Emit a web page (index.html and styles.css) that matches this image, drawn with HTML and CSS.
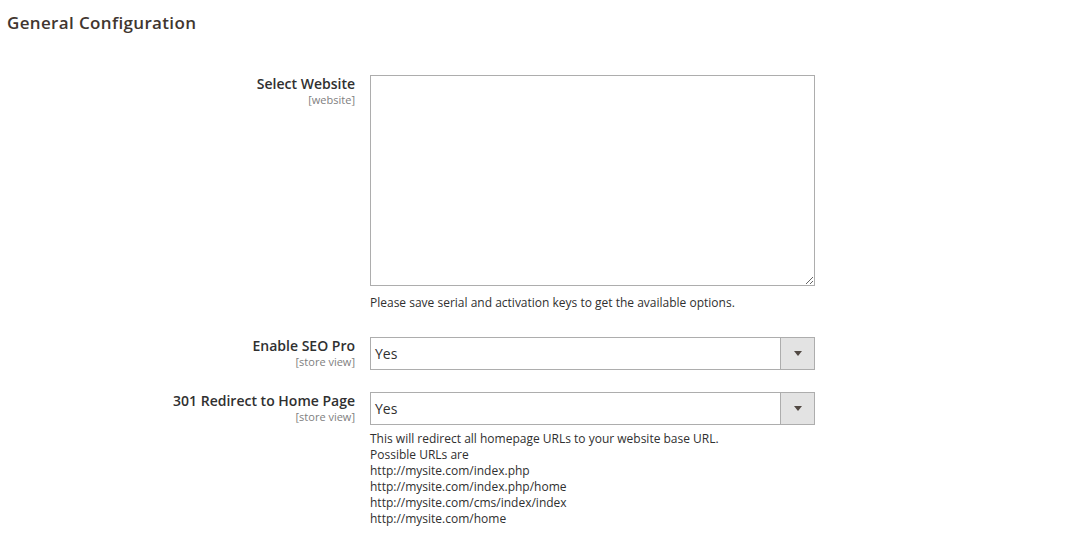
FILE: index.html
```html
<!DOCTYPE html>
<html>
<head>
<meta charset="utf-8">
<link rel="stylesheet" href="styles.css">
</head>
<body>
<div class="page">
  <h2 class="section-title">General Configuration</h2>
  <div class="form">
    <div class="row row-website">
      <div class="label">
        <span class="label-text">Select Website</span>
        <span class="scope">[website]</span>
      </div>
      <div class="control">
        <textarea class="multiselect"></textarea>
        <p class="note">Please save serial and activation keys to get the available options.</p>
      </div>
    </div>
    <div class="row row-seo">
      <div class="label">
        <span class="label-text">Enable SEO Pro</span>
        <span class="scope">[store view]</span>
      </div>
      <div class="control">
        <div class="select">
          <span class="select-value">Yes</span>
          <span class="select-btn"><svg width="8" height="5" viewBox="0 0 8 5"><path d="M0 0h8L4 5z" fill="#514943"/></svg></span>
        </div>
      </div>
    </div>
    <div class="row row-redirect">
      <div class="label">
        <span class="label-text">301 Redirect to Home Page</span>
        <span class="scope">[store view]</span>
      </div>
      <div class="control">
        <div class="select">
          <span class="select-value">Yes</span>
          <span class="select-btn"><svg width="8" height="5" viewBox="0 0 8 5"><path d="M0 0h8L4 5z" fill="#514943"/></svg></span>
        </div>
        <p class="comment">This will redirect all homepage URLs to your website base URL.<br>Possible URLs are<br>http://mysite.com/index.php<br>http://mysite.com/index.php/home<br>http://mysite.com/cms/index/index<br>http://mysite.com/home</p>
      </div>
    </div>
  </div>
</div>
</body>
</html>
```

FILE: styles.css
```css
html, body {
  margin: 0;
  padding: 0;
  background: #ffffff;
}
body {
  font-family: "Open Sans", "Liberation Sans", sans-serif;
  color: #303030;
}
.page {
  padding: 11px 0 0 7px;
}
.section-title {
  margin: 0;
  font-size: 17px;
  font-weight: 600;
  line-height: 24px;
  color: #41362f;
  letter-spacing: 0.35px;
}
.form {
  margin-top: 40px;
  display: flex;
  flex-direction: column;
}
.row {
  display: grid;
  grid-template-columns: 348px 445px;
  column-gap: 15px;
}
.row-seo {
  margin-top: 26px;
}
.row-redirect {
  margin-top: 22px;
}
.label {
  display: flex;
  flex-direction: column;
  align-items: flex-end;
  text-align: right;
  padding-top: 0;
}
.label-text {
  font-size: 14px;
  font-weight: 600;
  line-height: 18px;
  color: #303030;
}
.scope {
  font-size: 11px;
  line-height: 13px;
  color: #808080;
}
.control {
  display: flex;
  flex-direction: column;
}
.multiselect {
  box-sizing: border-box;
  width: 445px;
  height: 211px;
  margin: 0;
  border: 1px solid #adadad;
  border-radius: 0;
  background: #fff;
  resize: both;
  display: block;
}
.note {
  margin: 9px 0 0;
  font-size: 12px;
  line-height: 16px;
  color: #303030;
}
.select {
  box-sizing: border-box;
  width: 445px;
  height: 33px;
  border: 1px solid #adadad;
  display: flex;
  align-items: stretch;
  background: #fff;
}
.select-value {
  flex: 1;
  font-size: 14px;
  line-height: 31px;
  padding-left: 4px;
  color: #303030;
}
.select-btn {
  width: 33px;
  background: #e3e3e3;
  border-left: 1px solid #adadad;
  display: flex;
  align-items: center;
  justify-content: center;
}
.comment {
  margin: 6px 0 0;
  font-size: 12px;
  line-height: 16px;
  color: #303030;
}
```
